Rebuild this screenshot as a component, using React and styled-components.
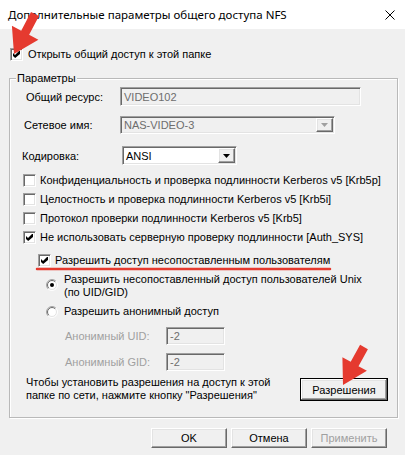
import React from 'react';
import styled, { createGlobalStyle, css } from 'styled-components';

const GlobalStyle = createGlobalStyle`
  html, body { margin: 0; padding: 0; background: #f0f0f0; }
  body {
    font-family: "Liberation Sans", Arial, sans-serif;
    font-size: 11px;
    color: #000;
  }
  * { box-sizing: border-box; }
`;

const sunken = css`
  border: 1px solid;
  border-color: #a0a0a0 #fff #fff #a0a0a0;
  box-shadow: inset 1px 1px 0 #696969, inset -1px -1px 0 #e3e3e3;
`;

const raised = css`
  border: 1px solid;
  border-color: #fff #696969 #696969 #fff;
  box-shadow: inset -1px -1px 0 #a0a0a0, inset 1px 1px 0 #e3e3e3;
`;

const Window = styled.div`
  position: relative;
  width: 405px;
  height: 455px;
  background: #f0f0f0;
  display: flex;
  flex-direction: column;
  overflow: hidden;
`;

const TitleBar = styled.div`
  flex: none;
  height: 29px;
  background: #fff;
  display: flex;
  align-items: center;
  justify-content: space-between;
  padding: 0 10px 0 8px;
`;

const Title = styled.span`
  font-family: "Noto Sans", "Liberation Sans", sans-serif;
  font-size: 11.5px;
  color: #000;
  line-height: 14px;
`;

const CloseIcon = styled.svg`
  width: 10px;
  height: 10px;
  display: block;
`;

const CheckRow = styled.div`
  display: flex;
  align-items: center;
  flex: none;
  height: ${(p) => p.$h || 19}px;
  margin-top: ${(p) => p.$mt || 0}px;
  margin-left: ${(p) => p.$ml}px;
`;

const BoxFrame = styled.span`
  flex: none;
  width: 13px;
  height: 13px;
  background: #fff;
  ${sunken};
  display: flex;
  align-items: center;
  justify-content: center;
`;

const RowText = styled.span`
  margin-left: ${(p) => p.$gap || 4}px;
  white-space: nowrap;
  line-height: 13px;
`;

const Group = styled.div`
  position: relative;
  flex: none;
  margin: 17px 0 0 9px;
  width: 389px;
  height: 340px;
  border: 1px solid #b9b9b9;
  box-shadow: inset 1px 1px 0 #fff, 1px 1px 0 #fff;
  display: flex;
  flex-direction: column;
`;

const Legend = styled.span`
  position: absolute;
  top: -7px;
  left: 6px;
  padding: 0 1px;
  background: #f0f0f0;
  line-height: 13px;
`;

const FieldRow = styled.div`
  display: flex;
  align-items: center;
  flex: none;
  height: ${(p) => p.$h}px;
  margin-top: ${(p) => p.$mt}px;
  margin-left: ${(p) => p.$ml}px;
`;

const FieldLabel = styled.span`
  flex: none;
  width: ${(p) => p.$w}px;
  color: ${(p) => (p.$disabled ? '#a0a0a0' : '#000')};
  white-space: nowrap;
`;

const TextBox = styled.div`
  ${sunken};
  flex: none;
  width: ${(p) => p.$w}px;
  height: 100%;
  background: ${(p) => (p.$white ? '#fff' : '#f0f0f0')};
  color: ${(p) => (p.$white ? '#000' : '#6d6d6d')};
  padding-left: 3px;
  display: flex;
  align-items: center;
`;

const BoxValue = styled.span`
  flex: 1;
  white-space: nowrap;
`;

const DropButton = styled.span`
  flex: none;
  align-self: stretch;
  width: 17px;
  margin: 1px;
  background: #f0f0f0;
  ${raised};
  display: flex;
  align-items: center;
  justify-content: center;
`;

const RadioRow = styled.div`
  display: flex;
  align-items: center;
  flex: none;
  height: ${(p) => p.$h}px;
  margin-top: ${(p) => p.$mt}px;
  margin-left: 36px;
`;

const RadioIcon = styled.svg`
  flex: none;
  width: 12px;
  height: 12px;
  display: block;
  margin-top: ${(p) => p.$shift || 0}px;
`;

const RadioText = styled.span`
  margin-left: 6px;
  line-height: 13px;
`;

const InfoRow = styled.div`
  display: flex;
  align-items: flex-start;
  flex: none;
  margin-top: 5px;
  margin-left: 16px;
`;

const InfoText = styled.p`
  margin: 0;
  width: 274px;
  line-height: 13px;
`;

const Button = styled.button`
  flex: none;
  width: ${(p) => p.$w}px;
  height: ${(p) => p.$h}px;
  margin-top: ${(p) => p.$mt || 0}px;
  padding: 0;
  font-family: inherit;
  font-size: 11px;
  background: #f0f0f0;
  color: ${(p) => (p.disabled ? '#a0a0a0' : '#000')};
  ${(p) =>
    p.$default
      ? css`
          border: 1px solid #000;
          box-shadow: inset -1px -1px 0 #696969, inset 1px 1px 0 #fff,
            inset -2px -2px 0 #a0a0a0, inset 2px 2px 0 #e3e3e3;
        `
      : raised};
`;

const ButtonBar = styled.div`
  display: flex;
  justify-content: flex-end;
  gap: 4px;
  margin-top: 10px;
  padding-right: 18px;
`;

const Overlay = styled.svg`
  position: absolute;
  left: 0;
  top: 0;
  width: 405px;
  height: 455px;
  pointer-events: none;
`;

function Check({ checked }) {
  return (
    <BoxFrame>
      {checked && (
        <svg width="7" height="7" viewBox="0 0 7 7" style={{ display: 'block' }}>
          <path d="M0 2 L2 4 L6 0 L7 0 L7 3 L2.2 7 L0 5 Z" fill="#000" />
        </svg>
      )}
    </BoxFrame>
  );
}

function Radio({ checked, shift }) {
  const a = 0.7071;
  const arc = (r, top) => {
    const bl = [6 - r * a, 6 + r * a];
    const tr = [6 + r * a, 6 - r * a];
    return top
      ? `M${bl[0]} ${bl[1]} A${r} ${r} 0 0 1 ${tr[0]} ${tr[1]}`
      : `M${tr[0]} ${tr[1]} A${r} ${r} 0 0 1 ${bl[0]} ${bl[1]}`;
  };
  return (
    <RadioIcon viewBox="0 0 12 12" $shift={shift}>
      <circle cx="6" cy="6" r="5" fill="#fff" />
      <path d={arc(5.5, true)} stroke="#a0a0a0" fill="none" />
      <path d={arc(5.5, false)} stroke="#fff" fill="none" />
      <path d={arc(4.5, true)} stroke="#696969" fill="none" />
      <path d={arc(4.5, false)} stroke="#e3e3e3" fill="none" />
      {checked && <circle cx="6" cy="6" r="2" fill="#000" />}
    </RadioIcon>
  );
}

function Arrow({ disabled }) {
  return (
    <svg width="7" height="4" viewBox="0 0 7 4" style={{ display: 'block' }}>
      <polygon points="0,0 7,0 3.5,4" fill={disabled ? '#a0a0a0' : '#000'} />
    </svg>
  );
}

function arrowPoints(sx, sy, tx, ty, headLen, headHalf, shaftHalf) {
  const dx = tx - sx;
  const dy = ty - sy;
  const len = Math.hypot(dx, dy);
  const ux = dx / len;
  const uy = dy / len;
  const px = -uy;
  const py = ux;
  const bx = tx - ux * headLen;
  const by = ty - uy * headLen;
  const pts = [
    [sx + px * shaftHalf, sy + py * shaftHalf],
    [bx + px * shaftHalf, by + py * shaftHalf],
    [bx + px * headHalf, by + py * headHalf],
    [tx, ty],
    [bx - px * headHalf, by - py * headHalf],
    [bx - px * shaftHalf, by - py * shaftHalf],
    [sx - px * shaftHalf, sy - py * shaftHalf],
  ];
  return pts.map((p) => p.map((v) => v.toFixed(1)).join(',')).join(' ');
}

const checks = [
  { label: 'Конфиденциальность и проверка подлинности Kerberos v5 [Krb5p]', checked: false },
  { label: 'Целостность и проверка подлинности Kerberos v5 [Krb5i]', checked: false },
  { label: 'Протокол проверки подлинности Kerberos v5 [Krb5]', checked: false },
  { label: 'Не использовать серверную проверку подлинности [Auth_SYS]', checked: true },
];

export default function App() {
  return (
    <>
      <GlobalStyle />
      <Window>
        <TitleBar>
          <Title>Дополнительные параметры общего доступа NFS</Title>
          <CloseIcon viewBox="0 0 10 10">
            <path d="M0.5 0.5 L9.5 9.5 M9.5 0.5 L0.5 9.5" stroke="#000" strokeWidth="1" />
          </CloseIcon>
        </TitleBar>

        <CheckRow $h={13} $mt={19} $ml={10}>
          <Check checked />
          <RowText $gap={5}>Открыть общий доступ к этой папке</RowText>
        </CheckRow>

        <Group>
          <Legend>Параметры</Legend>

          <FieldRow $h={19} $mt={8} $ml={16}>
            <FieldLabel $w={94}>Общий ресурс:</FieldLabel>
            <TextBox $w={241}>
              <BoxValue>VIDEO102</BoxValue>
            </TextBox>
          </FieldRow>

          <FieldRow $h={18} $mt={10} $ml={14}>
            <FieldLabel $w={96}>Сетевое имя:</FieldLabel>
            <TextBox $w={215}>
              <BoxValue>NAS-VIDEO-3</BoxValue>
              <DropButton>
                <Arrow disabled />
              </DropButton>
            </TextBox>
          </FieldRow>

          <FieldRow $h={19} $mt={12} $ml={12}>
            <FieldLabel $w={100}>Кодировка:</FieldLabel>
            <TextBox $w={115} $white>
              <BoxValue>ANSI</BoxValue>
              <DropButton>
                <Arrow />
              </DropButton>
            </TextBox>
          </FieldRow>

          {checks.map((c, i) => (
            <CheckRow key={c.label} $mt={i === 0 ? 6 : 0} $ml={13}>
              <Check checked={c.checked} />
              <RowText>{c.label}</RowText>
            </CheckRow>
          ))}

          <CheckRow $mt={4} $ml={28}>
            <Check checked />
            <RowText>Разрешить доступ несопоставленным пользователям</RowText>
          </CheckRow>

          <RadioRow $h={26} $mt={3}>
            <Radio checked shift={-3} />
            <RadioText>
              Разрешить несопоставленный доступ пользователей Unix
              <br />
              (по UID/GID)
            </RadioText>
          </RadioRow>

          <RadioRow $h={19} $mt={3}>
            <Radio />
            <RadioText>Разрешить анонимный доступ</RadioText>
          </RadioRow>

          <FieldRow $h={18} $mt={6} $ml={55}>
            <FieldLabel $w={101} $disabled>
              Анонимный UID:
            </FieldLabel>
            <TextBox $w={59}>
              <BoxValue>-2</BoxValue>
            </TextBox>
          </FieldRow>

          <FieldRow $h={18} $mt={8} $ml={55}>
            <FieldLabel $w={101} $disabled>
              Анонимный GID:
            </FieldLabel>
            <TextBox $w={59}>
              <BoxValue>-2</BoxValue>
            </TextBox>
          </FieldRow>

          <InfoRow>
            <InfoText>
              Чтобы установить разрешения на доступ к этой
              <br />
              папке по сети, нажмите кнопку "Разрешения"
            </InfoText>
            <Button $w={88} $h={23} $mt={2} $default>
              Разрешения
            </Button>
          </InfoRow>
        </Group>

        <ButtonBar>
          <Button $w={76} $h={20}>OK</Button>
          <Button $w={76} $h={20}>Отмена</Button>
          <Button $w={76} $h={20} disabled>
            Применить
          </Button>
        </ButtonBar>

        <Overlay viewBox="0 0 405 455">
          <polygon points={arrowPoints(35, 14, 14, 54, 24, 15, 4.5)} fill="#e53a2f" />
          <polygon points={arrowPoints(364, 347, 343, 385, 24, 14, 4.5)} fill="#e53a2f" />
          <line x1="37" y1="269" x2="330" y2="269" stroke="#e53a2f" strokeWidth="2.5" strokeLinecap="round" />
        </Overlay>
      </Window>
    </>
  );
}
